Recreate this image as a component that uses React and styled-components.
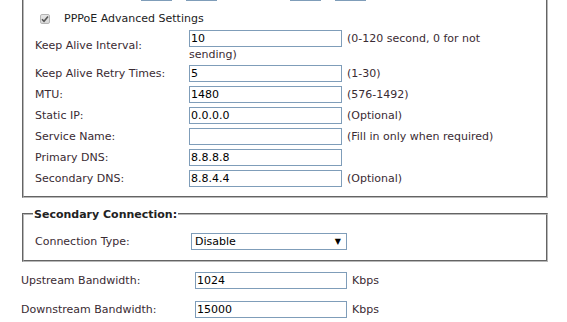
import styled, { createGlobalStyle } from "styled-components";

const GlobalStyle = createGlobalStyle`
  html, body {
    margin: 0;
    padding: 0;
    background: #fff;
  }
  body {
    font-family: "DejaVu Sans", Verdana, sans-serif;
    font-size: 11px;
    color: #333;
    overflow: hidden;
  }
`;

const Page = styled.div`
  width: 567px;
  height: 322px;
  overflow: hidden;
  box-sizing: border-box;
  padding-left: 21px;
`;

const Shift = styled.div`
  margin-top: -30px;
`;

const Fieldset = styled.fieldset`
  margin: 0 0 0 1px;
  width: 526px;
  min-width: 0;
  box-sizing: border-box;
  border: 2px groove #b8b8b8;
  padding: ${(p) => p.$pad};
`;

const Legend = styled.legend`
  font-weight: bold;
  color: #222;
  padding: 0 1px;
  margin-left: -2px;
  line-height: 13px;
`;

const Stack = styled.div`
  display: flex;
  flex-direction: column;
  gap: 4px;
`;

const ScheduleRow = styled.div`
  display: flex;
  align-items: center;
  height: 17px;
  margin-bottom: 11px;
  padding-left: 106px;
  white-space: nowrap;
`;

const SmallInput = styled.input`
  width: 31px;
  height: 17px;
  box-sizing: border-box;
  border: 1px solid #7f9db9;
  padding: 0 2px;
  margin: 0 ${(p) => p.$after || 0}px 0 ${(p) => p.$before || 0}px;
  font: inherit;
`;

const CheckRow = styled.label`
  display: flex;
  align-items: center;
  height: 13px;
  padding-left: 5px;
  margin-bottom: 5px;
  color: #222;
`;

const CheckBox = styled.span`
  width: 10px;
  height: 10px;
  box-sizing: border-box;
  border: 1px solid #b5b5b5;
  border-radius: 2px;
  background: linear-gradient(#e6e6e6, #d8d8d8);
  display: flex;
  align-items: center;
  justify-content: center;
  margin-right: 14px;
`;

const Row = styled.div`
  display: grid;
  grid-template-columns: ${(p) => p.$label}px ${(p) => p.$value}px;
  align-items: center;
  min-height: 17px;
`;

const Label = styled.span`
  color: #3a2b33;
  white-space: nowrap;
`;

const Value = styled.div`
  line-height: 13px;
`;

const TextInput = styled.input`
  display: inline-block;
  vertical-align: middle;
  width: ${(p) => p.$w || 153}px;
  height: 17px;
  box-sizing: border-box;
  border: 1px solid #7f9db9;
  padding: 0 1px;
  margin: 0 5px 0 0;
  font: inherit;
  color: #000;
  background: #fff;
  outline: none;
`;

const Hint = styled.span`
  vertical-align: middle;
  color: #3a2b33;
`;

const FakeSelect = styled.div`
  width: 156px;
  height: 17px;
  box-sizing: border-box;
  border: 1px solid #7f9db9;
  display: flex;
  align-items: center;
  justify-content: space-between;
  padding: 0 5px 0 3px;
  color: #000;
  background: #fff;
`;

const Arrow = styled.span`
  font-size: 8px;
  color: #000;
`;

const Gap = styled.div`
  height: ${(p) => p.$h}px;
`;

const BandRow = styled.div`
  display: grid;
  grid-template-columns: 174px auto;
  align-items: center;
  height: 17px;
  margin-bottom: 12px;
`;

const pppoeRows = [
  { label: "Keep Alive Interval:", value: "10", hint: "(0-120 second, 0 for not sending)" },
  { label: "Keep Alive Retry Times:", value: "5", hint: "(1-30)" },
  { label: "MTU:", value: "1480", hint: "(576-1492)" },
  { label: "Static IP:", value: "0.0.0.0", hint: "(Optional)" },
  { label: "Service Name:", value: "", hint: "(Fill in only when required)" },
  { label: "Primary DNS:", value: "8.8.8.8", hint: "" },
  { label: "Secondary DNS:", value: "8.8.4.4", hint: "(Optional)" },
];

const bandwidth = [
  { label: "Upstream Bandwidth:", value: "1024" },
  { label: "Downstream Bandwidth:", value: "15000" },
];

export default function App() {
  return (
    <Page>
      <GlobalStyle />
      <Shift>
        <Fieldset $pad="12px 10px 9px 11px">
          <ScheduleRow>
            <SmallInput defaultValue="" $after={14} />
            <SmallInput defaultValue="" $after={5} />
            <Hint>(hh:mm) ~</Hint>
            <SmallInput defaultValue="" $before={8} $after={14} />
            <SmallInput defaultValue="" $after={5} />
            <Hint>(hh:mm)</Hint>
          </ScheduleRow>

          <CheckRow>
            <CheckBox>
              <svg width="8" height="8" viewBox="0 0 8 8">
                <path d="M1 4.2 L3 6.2 L7 1.5" fill="none" stroke="#555" strokeWidth="1.6" />
              </svg>
            </CheckBox>
            PPPoE Advanced Settings
          </CheckRow>

          <Stack>
            {pppoeRows.map((r) => (
              <Row key={r.label} $label={154} $value={320}>
                <Label>{r.label}</Label>
                <Value>
                  <TextInput defaultValue={r.value} />
                  {r.hint && <Hint>{r.hint}</Hint>}
                </Value>
              </Row>
            ))}
          </Stack>
        </Fieldset>
      </Shift>

      <Gap $h={10} />

      <Fieldset $pad="12px 10px 10px 11px">
        <Legend>Secondary Connection:</Legend>
        <Row $label={156} $value={200}>
          <Label>Connection Type:</Label>
          <FakeSelect>
            <span>Disable</span>
            <Arrow>▼</Arrow>
          </FakeSelect>
        </Row>
      </Fieldset>

      <Gap $h={10} />

      {bandwidth.map((b) => (
        <BandRow key={b.label}>
          <Label>{b.label}</Label>
          <div>
            <TextInput $w={152} defaultValue={b.value} />
            <Hint>Kbps</Hint>
          </div>
        </BandRow>
      ))}
    </Page>
  );
}
